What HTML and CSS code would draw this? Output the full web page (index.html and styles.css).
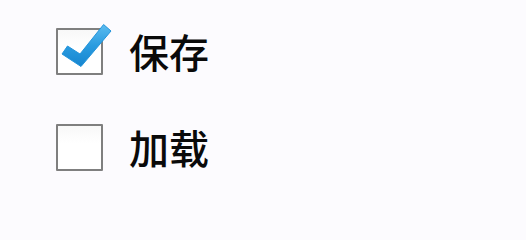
FILE: index.html
```html
<!DOCTYPE html>
<html lang="zh">
<head>
<meta charset="utf-8">
<link rel="stylesheet" href="styles.css">
</head>
<body>
<div class="list">
  <label class="row">
    <span class="box">
      <svg class="check" viewBox="0 -8 60 50" width="60" height="50">
        <defs>
          <linearGradient id="g" x1="0" y1="0" x2="0" y2="1">
            <stop offset="0" stop-color="#5cbcef"/>
            <stop offset="0.5" stop-color="#2a9ce0"/>
            <stop offset="1" stop-color="#1685cf"/>
          </linearGradient>
        </defs>
        <polygon points="6,26 11.5,18 24,26 47.6,-3.5 55,3 25,38.5" fill="url(#g)" stroke="#2394db" stroke-width="1" stroke-linejoin="round"/>
      </svg>
    </span>
    <span class="text">保存</span>
  </label>
  <label class="row">
    <span class="box"></span>
    <span class="text">加载</span>
  </label>
</div>
</body>
</html>
```
FILE: styles.css
```css
html, body {
  margin: 0;
  padding: 0;
  background: #fcfbfe;
}
.list {
  display: flex;
  flex-direction: column;
  gap: 49px;
  padding: 28px 0 0 56px;
}
.row {
  display: flex;
  align-items: center;
  gap: 26px;
  height: 47px;
}
.box {
  position: relative;
  box-sizing: border-box;
  width: 47px;
  height: 47px;
  border: 2px solid #7f7f7f;
  border-radius: 1px;
  background: linear-gradient(#f8f8f8, #ffffff 40%);
  flex: none;
}
.check {
  position: absolute;
  left: -2px;
  top: -10px;
  overflow: visible;
}
.text {
  font-family: "Noto Sans CJK SC", "Noto Sans", sans-serif;
  font-size: 40px;
  font-weight: 500;
  line-height: 47px;
  color: #0a0a0a;
}
```
